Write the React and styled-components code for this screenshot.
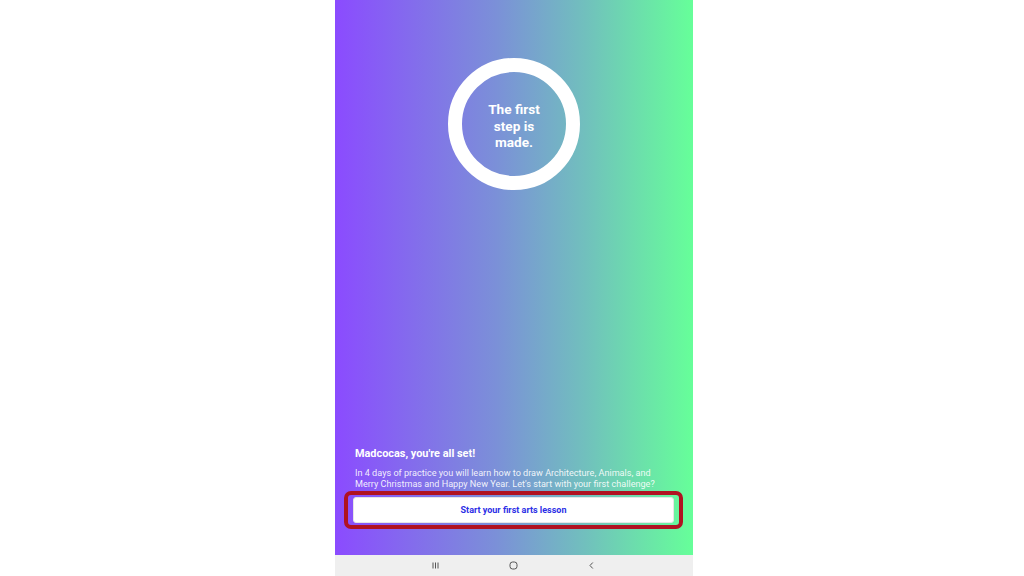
import styled, { createGlobalStyle } from "styled-components";

const GlobalStyle = createGlobalStyle`
  html, body {
    margin: 0;
    padding: 0;
    background: #ffffff;
    font-family: Roboto, "Liberation Sans", sans-serif;
  }
`;

const Page = styled.div`
  width: 1024px;
  height: 576px;
  overflow: hidden;
  background: #ffffff;
`;

const Phone = styled.div`
  width: 358px;
  height: 576px;
  margin-left: 335px;
  display: flex;
  flex-direction: column;
`;

const Screen = styled.main`
  flex: 1;
  display: flex;
  flex-direction: column;
  background: linear-gradient(90deg, #8b4bff 0%, #7b90d8 45%, #71c0bd 70%, #66ff99 100%);
  padding: 58px 0 0;
  box-sizing: border-box;
`;

const Ring = styled.div`
  width: 132px;
  height: 132px;
  margin: 0 auto;
  box-sizing: border-box;
  border: 14px solid #ffffff;
  border-radius: 50%;
  padding-top: 4px;
  display: flex;
  align-items: center;
  justify-content: center;
  text-align: center;
  color: #ffffff;
  font-weight: 700;
  font-size: 13.6px;
  line-height: 16.5px;
`;

const Bottom = styled.section`
  margin-top: auto;
  padding: 0 10px 26px 9px;
  display: flex;
  flex-direction: column;
`;

const Title = styled.h1`
  margin: 0 0 8px 11px;
  font-size: 10.9px;
  line-height: 13px;
  font-weight: 700;
  color: #ffffff;
`;

const Text = styled.p`
  margin: 0 0 2px 11px;
  font-size: 9.1px;
  line-height: 10.5px;
  color: rgba(255, 255, 255, 0.9);
  white-space: nowrap;
`;

const Highlight = styled.div`
  border: 4px solid #b01221;
  border-radius: 7px;
  padding: 2px 5px;
`;

const Button = styled.button`
  display: block;
  width: 100%;
  height: 26px;
  border: 1px solid #e6e6e6;
  border-radius: 3px;
  background: #ffffff;
  color: #2b2fe6;
  font-family: Roboto, "Liberation Sans", sans-serif;
  font-weight: 700;
  font-size: 9px;
  cursor: pointer;
`;

const NavBar = styled.nav`
  height: 21px;
  background: #efefef;
  display: flex;
  align-items: center;
  justify-content: space-between;
  padding: 0 97px 0 96px;
  color: #555555;
`;

const NavIcon = styled.svg`
  width: 9px;
  height: 9px;
  display: block;
`;

export default function App() {
  return (
    <Page>
      <GlobalStyle />
      <Phone>
        <Screen>
          <Ring>
            The first
            <br />
            step is
            <br />
            made.
          </Ring>
          <Bottom>
            <Title>Madcocas, you're all set!</Title>
            <Text>
              In 4 days of practice you will learn how to draw Architecture, Animals, and
              <br />
              Merry Christmas and Happy New Year. Let's start with your first challenge?
            </Text>
            <Highlight>
              <Button>Start your first arts lesson</Button>
            </Highlight>
          </Bottom>
        </Screen>
        <NavBar>
          <NavIcon viewBox="0 0 9 9">
            <path d="M2 1.5v6M4.5 1.5v6M7 1.5v6" stroke="#555" strokeWidth="1" />
          </NavIcon>
          <NavIcon viewBox="0 0 9 9">
            <rect x="1" y="1" width="7" height="7" rx="2.6" fill="none" stroke="#555" strokeWidth="1" />
          </NavIcon>
          <NavIcon viewBox="0 0 9 9">
            <path d="M5.8 1.5L3 4.5l2.8 3" fill="none" stroke="#555" strokeWidth="1" />
          </NavIcon>
        </NavBar>
      </Phone>
    </Page>
  );
}
